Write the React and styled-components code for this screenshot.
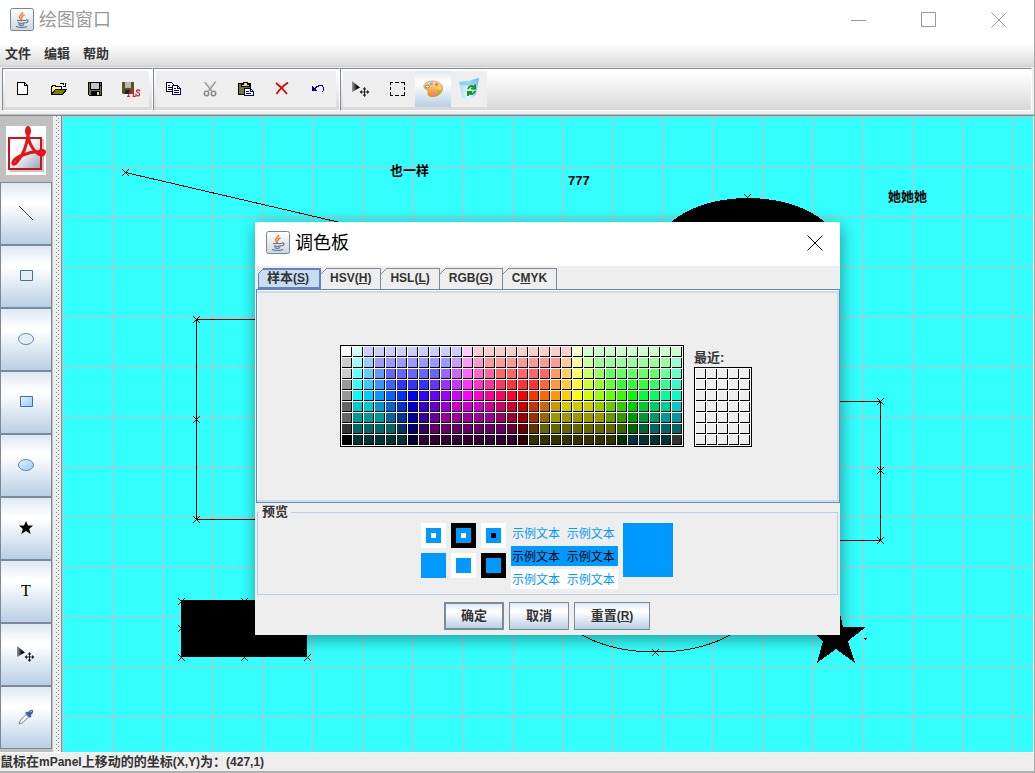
import React, { useState } from "react";
import styled, { createGlobalStyle, css, ThemeProvider } from "styled-components";

const theme = {
  colors: {
    control: "#eeeeee",
    edge: "#7a8a99",
    accent: "#6382bf",
    tint: "#c8ddf2",
    line: "#b8cfe5",
    canvas: "#33ffff",
    grid: "#c0c0c0",
  },
  metal: "linear-gradient(#dde8f3 0%, #ffffff 30%, #ffffff 35%, #b8cfe5 100%)",
};

const GlobalStyle = createGlobalStyle`
  *,
  *::before {
    box-sizing: border-box;
  }
  body {
    margin: 0;
    background: #eeeeee;
    color: #333333;
    font: bold 12px/16px "Liberation Sans", "Noto Sans CJK SC", sans-serif;
  }
  button {
    appearance: none;
    border: 0;
    border-radius: 0;
    color: inherit;
    font: inherit;
    margin: 0;
    padding: 0;
  }
  svg {
    display: block;
  }
`;

const Cjk = styled.span`
  font-size: 13px;
`;

const Window = styled.div`
  border-right: 1px solid #a9a9a9;
  display: flex;
  flex-direction: column;
  min-height: 100vh;
`;

const TitleBar = styled.header`
  align-items: center;
  background: #ffffff;
  color: ${(props) => (props.$active ? "#000000" : "#999999")};
  display: flex;
  height: ${(props) => (props.$active ? "44px" : "40px")};
  padding-bottom: ${(props) => (props.$active ? "2px" : "0")};
  padding-left: ${(props) => (props.$active ? "11px" : "10px")};
`;

const Title = styled.h1`
  flex: 1;
  font-size: 18px;
  font-weight: 400;
  line-height: 24px;
  margin: 0 0 0 5px;
`;

const CaptionButton = styled.button`
  align-items: center;
  background: transparent;
  display: flex;
  height: 40px;
  justify-content: center;
  width: ${(props) => props.$width || "70px"};
`;

const MenuBar = styled.nav`
  align-items: center;
  background: linear-gradient(#ffffff 0%, #ffffff 15%, #dadada 100%);
  border-bottom: 1px solid #cccccc;
  display: flex;
  gap: 13px;
  height: 27px;
  padding: 1px 0 0 5px;
`;

const MenuItem = styled.button`
  background: transparent;
  font-size: 13px;
`;

const ToolArea = styled.div`
  background: ${(props) => props.theme.colors.control};
  border-bottom: 1px solid ${(props) => props.theme.colors.grid};
  display: flex;
  height: 48px;
  padding: 1px 2px 3px 2px;
`;

const ToolBar = styled.div`
  background: linear-gradient(#ffffff 0%, #ffffff 10%, #d8d8d8 100%);
  border: 1px solid #ffffff;
  border-left-color: ${(props) => props.theme.colors.edge};
  border-top-color: ${(props) => props.theme.colors.edge};
  display: flex;
  flex: ${(props) => (props.$grow ? "1" : "none")};
  padding: 2px 3px 0 2px;
`;

const ToolButton = styled.button`
  align-items: center;
  background: ${(props) => (props.$pressed ? props.theme.metal : props.theme.colors.control)};
  display: flex;
  height: 36px;
  justify-content: center;
  width: 36px;
`;

const Workspace = styled.main`
  border-top: 1px solid ${(props) => props.theme.colors.edge};
  display: flex;
  flex: 1;
  padding-right: 1px;
`;

const Sidebar = styled.aside`
  background: ${(props) => props.theme.colors.grid};
  padding-right: 1px;
  width: 53px;
`;

const Logo = styled.div`
  height: 66px;
  padding: 10px 6px 0;
`;

const ShapeButton = styled.button`
  align-items: center;
  background: ${(props) => props.theme.metal};
  border: 1px solid ${(props) => props.theme.colors.edge};
  color: #000000;
  display: flex;
  height: 63px;
  justify-content: center;
  padding-bottom: 2px;
  width: 52px;
`;

const Divider = styled.div`
  background: ${(props) => props.theme.colors.control};
  border-right: 1px solid ${(props) => props.theme.colors.edge};
  padding: 0 3px;
  width: 9px;

  &::before {
    background-image: conic-gradient(at 1px 1px, transparent 75%, #7f8790 0),
      conic-gradient(at 1px 1px, transparent 75%, #7f8790 0);
    background-position: 0 0, 2px 2px;
    background-size: 4px 4px;
    content: "";
    display: block;
    height: 100%;
    width: 3px;
  }
`;

const Canvas = styled.div`
  background-color: ${(props) => props.theme.colors.canvas};
  background-image: linear-gradient(${(props) => props.theme.colors.grid} 1px, transparent 1px),
    linear-gradient(90deg, ${(props) => props.theme.colors.grid} 1px, transparent 1px);
  background-size: 50px 50px;
  flex: 1;
  min-width: 0;
  overflow: hidden;
`;

const StatusBar = styled.footer`
  border-bottom: 2px solid #b0b0b0;
  border-top: 1px solid #ffffff;
  height: 21px;
  line-height: 18px;
  white-space: nowrap;
`;

const Dialog = styled.div`
  background: ${(props) => props.theme.colors.control};
  box-shadow: 1px 4px 16px rgba(0, 0, 0, 0.4);
  left: 255px;
  position: absolute;
  top: 222px;
  width: 585px;
`;

const TabList = styled.div`
  display: flex;
  padding: 2px 0 0 3px;
`;

const Tab = styled.button`
  background: ${(props) => props.theme.colors.control};
  border: 1px solid ${(props) => props.theme.colors.edge};
  border-bottom: 0;
  border-left: 0;
  height: 21px;
  padding: 0 9px 2px;
  position: relative;

  &::before {
    background: linear-gradient(
      135deg,
      ${(props) => props.theme.colors.control} 44%,
      ${(props) => (props.$selected ? props.theme.colors.accent : props.theme.colors.edge)} 44%,
      ${(props) => (props.$selected ? props.theme.colors.accent : props.theme.colors.edge)} 56%,
      transparent 56%
    );
    content: "";
    height: 6px;
    left: 0;
    position: absolute;
    top: -1px;
    width: 6px;
  }

  ${(props) =>
    props.$selected &&
    css`
      background: ${props.theme.colors.tint};
      border: 2px solid ${props.theme.colors.accent};
      border-left-width: 1px;
      padding: 0 10px 1px 8px;

      &::before {
        left: -1px;
        top: -2px;
      }
    `}
`;

const TabPanel = styled.section`
  align-items: center;
  border: 1px solid ${(props) => props.theme.colors.accent};
  border-bottom-color: ${(props) => props.theme.colors.edge};
  border-right-color: ${(props) => props.theme.colors.edge};
  box-shadow: inset 0 1px #ffffff, inset 0 3px ${(props) => props.theme.colors.tint},
    inset -2px -2px ${(props) => props.theme.colors.tint}, inset 1px 0 #ffffff;
  display: flex;
  height: 214px;
  justify-content: center;
  margin-left: 1px;
  padding-right: 4px;
`;

const SwatchGroup = styled.div`
  align-items: flex-end;
  display: flex;
  gap: 10px;
`;

const Recent = styled.div`
  line-height: 18px;
`;

const SwatchGrid = styled.div`
  background: #ffffff;
  border: 1px solid #000000;
  display: grid;
  gap: 1px;
  grid-template-columns: repeat(${(props) => props.$columns}, 10px);
  padding: 1px;
  width: max-content;
`;

const Swatch = styled.button`
  border-bottom: 1px solid #000000;
  border-right: 1px solid #000000;
  height: 10px;
`;

const Preview = styled.fieldset`
  border: 1px solid ${(props) => props.theme.colors.line};
  display: flex;
  gap: 5px;
  height: 92px;
  justify-content: center;
  margin: 0 2px;
  min-width: 0;
  padding: 2px 1px 0 0;
`;

const Legend = styled.legend`
  font-size: 13px;
  line-height: 18px;
  margin-left: 1px;
  padding: 0 3px;
`;

const ChipGrid = styled.div`
  align-content: start;
  display: grid;
  gap: 5px;
  grid-template-columns: repeat(3, 25px);
  grid-auto-rows: 25px;
`;

const Chip = styled.div`
  align-items: center;
  background: ${(props) => props.$outer};
  display: flex;
  justify-content: center;

  &::before {
    background: ${(props) => props.$core};
    border: 5px solid ${(props) => props.$middle};
    content: "";
    height: 15px;
    width: 15px;
  }
`;

const Samples = styled.div`
  display: flex;
  flex-direction: column;
  gap: 3px;
  width: 107px;
`;

const Sample = styled.div`
  background: ${(props) => props.$background};
  color: ${(props) => props.$color};
  font-weight: 400;
  height: 20px;
  line-height: 22px;
  padding-left: 1px;
  white-space: pre;
`;

const ColorBlock = styled.div`
  background: ${(props) => props.$color};
  height: 54px;
  width: 50px;
`;

const Actions = styled.div`
  display: flex;
  gap: 5px;
  justify-content: center;
  padding: 7px 1px 5px 0;
`;

const ActionButton = styled.button`
  background: ${(props) => props.theme.metal};
  border: ${(props) => (props.$primary ? "2px" : "1px")} solid ${(props) => props.theme.colors.edge};
  height: 28px;
  width: ${(props) => (props.$wide ? "76px" : "60px")};
`;

// "color*count" runs, one string per row of the swatch table
const SWATCH_ROWS = [
  "fff cff ccf*9 fcf fcc*9 ffc cfc*9",
  "ccc 9ff 9cf 99f*7 c9f f9f f9c f99*7 fc9 ff9 cf9 9f9*7 9fc",
  "ccc 6ff 6cf 69f 66f*5 96f c6f f6f f6c f69 f66*5 f96 fc6 ff6 cf6 9f6 6f6*5 6f9 6fc",
  "999 3ff 3cf 39f 36f 33f*3 63f 93f c3f f3f f3c f39 f36 f33*3 f63 f93 fc3 ff3 cf3 9f3 6f3 3f3*3 3f6 3f9 3fc",
  "999 0ff 0cf 09f 06f 03f 00f 30f 60f 90f c0f f0f f0c f09 f06 f03 f00 f30 f60 f90 fc0 ff0 cf0 9f0 6f0 3f0 0f0 0f3 0f6 0f9 0fc",
  "666 0cc*2 09c 06c 03c 00c 30c 60c 90c c0c*3 c09 c06 c03 c00 c30 c60 c90 cc0*3 9c0 6c0 3c0 0c0 0c3 0c6 0c9 0cc",
  "666 099*3 069 039 009 309 609 909*5 906 903 900 930 960 990*5 690 390 090 093 096 099*2",
  "333 066*4 036 006 306 606*7 603 600 630 660*7 360 060 063 066*3",
  "000 033*5 003 303*9 300 330*8 030 033*4 333",
];

const swatches = SWATCH_ROWS.flatMap((row) =>
  row.split(" ").flatMap((run) => {
    const [color, count = 1] = run.split("*");
    return Array(Number(count)).fill(`#${color}`);
  })
);

const recentSwatches = Array(35).fill("#eeeeee");

const JavaIcon = () => (
  <svg width="24" height="24" viewBox="0 0 24 24" fill="none">
    <defs>
      <linearGradient id="cup-back" x1="0" y1="0" x2="0" y2="1">
        <stop offset="0" stopColor="#ffffff" />
        <stop offset="1" stopColor="#cfd6dd" />
      </linearGradient>
    </defs>
    <rect x="0.5" y="0.5" width="23" height="22" rx="2" fill="url(#cup-back)" stroke="#6f8798" />
    <path d="M12.5 4c1 2-4 3.500-3 5.500 .5 1 1.500 1.500 2 2.500M14.500 7c-2 .8-3.500 2-2.500 3.500" stroke="#ee7a22" strokeWidth="1.500" />
    <path d="M7 12.500h9M8 14.500c1 1 6 1 7 0M8.500 16.500c2 1 4 1 5.500 0M6 18.500c3 1.300 9 1.300 11 0M16 12c3-.5 2.500 2.500-.5 3" stroke="#4f7597" strokeWidth="1.200" />
  </svg>
);

const CrossIcon = ({ color }) => (
  <svg width="16" height="16" viewBox="0 0 16 16" stroke={color}>
    <path d="M0.500 0.500l15 15M15.500 0.500l-15 15" />
  </svg>
);

const PixelSvg = ({ width = 16, height = 16, children }) => (
  <svg width={width} height={height} viewBox={`0 0 ${width} ${height}`} fill="none" shapeRendering="crispEdges">
    {children}
  </svg>
);

const NewIcon = () => (
  <PixelSvg>
    <path d="M2.500 1.500h7l3 3v9h-10z" fill="#fff" stroke="#000" />
    <path d="M9.500 1.500v3h3" stroke="#000" />
  </PixelSvg>
);

const OpenIcon = () => (
  <PixelSvg>
    <path d="M0.500 13.500v-8h1v-1h3v1h6v4" fill="#ffff7a" stroke="#000" />
    <path d="M1 13V6h9v3H5z" fill="#ffff66" />
    <path d="M0.500 13.500l4-5h11l-4 5z" fill="#808000" stroke="#000" />
    <path d="M8.500 3.500c1-2 4-2 5 1M14.500 2v3H11.500" stroke="#000" />
  </PixelSvg>
);

const SaveIcon = () => (
  <PixelSvg>
    <path d="M1.500 1.500h13v13h-12l-1-1z" fill="#808000" stroke="#000" />
    <path d="M4 2h8v6H4z" fill="#c6c6c6" />
    <path d="M3.500 2v6.500h9V2M13 4h1" stroke="#000" />
    <path d="M4 10h9v4H4z" fill="#000" />
    <path d="M10 11h2v3h-2z" fill="#d8d8d8" />
  </PixelSvg>
);

const SaveAsIcon = () => (
  <svg width="20" height="16" viewBox="0 0 20 16">
    <path d="M1 1h12v12H2l-1-1z" fill="#56561c" />
    <path d="M4 1h6v6H4z" fill="#b8b8b8" />
    <path d="M4 9h6v4H4z" fill="#222" />
    <path d="M7 15.500l3.500-8 2.500 8M8.500 12.500h4M6 15.500h3M11.500 15.500h3M18.500 9.500c-3-2-4 1-1.500 2s2 4.500-2 3M18.500 8.500v2M15 12.500v3" fill="none" stroke="#c42b2b" strokeWidth="1.200" />
  </svg>
);

const CopyIcon = () => (
  <PixelSvg>
    <path d="M0.500 1.500h5l3 3v6h-8z" fill="#fff" stroke="#000" />
    <path d="M2 4.500h2M2 6.500h5M2 8.500h5" stroke="#000" />
    <path d="M6.500 4.500h5l3 3v6h-8z" fill="#fff" stroke="#000080" />
    <path d="M11.500 4.500v3h3M8 7.500h2M8 9.500h5M8 11.500h5" stroke="#000080" />
  </PixelSvg>
);

const CutIcon = () => (
  <svg width="16" height="16" viewBox="0 0 16 16" fill="none" stroke="#8a8a8a">
    <path d="M3 1l7 9M14 0L6 10" strokeWidth="2" stroke="#c4c4c4" />
    <path d="M2.500 1l7 9M13.500 1L7 10" />
    <circle cx="4.500" cy="12.500" r="2.200" strokeWidth="1.500" />
    <circle cx="11.500" cy="12.500" r="2.200" strokeWidth="1.500" />
  </svg>
);

const PasteIcon = () => (
  <PixelSvg>
    <path d="M0.500 2.500h12v11h-12z" fill="#77752f" stroke="#000" />
    <path d="M3 5V3h2V1h4v2h2v2z" fill="#e8e34a" stroke="#000" />
    <path d="M6.500 7.500h6l3 3v4h-9z" fill="#fff" stroke="#000080" />
    <path d="M8 10.500h3M8 12.500h5M12.500 8v2.500h3" stroke="#000080" />
  </PixelSvg>
);

const DeleteIcon = () => (
  <svg width="16" height="16" viewBox="0 0 16 16" fill="none" stroke="#dd0000">
    <path d="M2 2c4 3 8 7 11 11" strokeWidth="1.800" />
    <path d="M14 1.500C9 5 5 9 2.500 13" strokeWidth="1.800" />
  </svg>
);

const UndoIcon = () => (
  <PixelSvg>
    <path d="M2 5v5h5z" fill="#000080" />
    <path d="M5 7.500l2-2h1l1-1h3l1.500 2v3l-1.500 1" stroke="#000080" />
  </PixelSvg>
);

const MoveIcon = () => (
  <svg width="18" height="16" viewBox="0 0 18 16">
    <defs>
      <linearGradient id="pointer">
        <stop offset="0" stopColor="#999" />
        <stop offset="0.700" stopColor="#000" />
      </linearGradient>
    </defs>
    <path d="M0 0v11l8-4.500z" fill="url(#pointer)" />
    <path d="M12.500 6l2 2.500h-4zM12.500 16l2-2.500h-4zM7.500 11l2.500-2v4zM17.500 11l-2.500-2v4z" fill="#222" />
    <path d="M12.500 8v6M9.500 11h6" stroke="#222" />
  </svg>
);

const SelectIcon = () => (
  <PixelSvg>
    <path d="M1 4V1.500h3M6 1.500h4M12 1.500h3.500V4M15.500 6v3M15.500 11v3.500H12M10 14.500H6M4 14.500H1.500V11M1.500 9V6M1.500 4V1" stroke="#000" />
  </PixelSvg>
);

const PaletteIcon = () => (
  <svg width="20" height="18" viewBox="0 0 20 18">
    <defs>
      <linearGradient id="palette" x1="0" y1="0" x2="0" y2="1">
        <stop offset="0" stopColor="#ffe0a0" />
        <stop offset="1" stopColor="#f08a10" />
      </linearGradient>
    </defs>
    <path d="M1 7C0 3 6 1 10 1c6 0 10 4 9.500 8-.5 5-6 8-11 7.500C3 16 6 12 4.500 10 3 9 1.500 9.500 1 7z" fill="url(#palette)" stroke="#c98a3a" strokeWidth="0.700" />
    <ellipse cx="4.500" cy="6.500" rx="2" ry="1.400" fill="#fff" stroke="#997247" />
    <circle cx="8.500" cy="3.800" r="1.500" fill="#56c6ff" />
    <circle cx="13.500" cy="4.500" r="1.500" fill="#ff6c4a" />
    <circle cx="16.500" cy="8" r="1.500" fill="#ffe34a" />
    <circle cx="16" cy="12" r="1.500" fill="#50dc58" />
    <circle cx="11.500" cy="14" r="1.500" fill="#d47aff" />
  </svg>
);

const RecycleIcon = () => (
  <svg width="22" height="22" viewBox="0 0 22 22">
    <defs>
      <linearGradient id="bin">
        <stop offset="0" stopColor="#a9dcff" />
        <stop offset="0.500" stopColor="#e8f8ff" />
        <stop offset="1" stopColor="#67b5ec" />
      </linearGradient>
    </defs>
    <path d="M1 4l11-2 9-2-3 17-9 5-5-3z" fill="url(#bin)" />
    <path d="M1 4l10-1 10-3-8 8-10-1z" fill="#6ec6f5" opacity="0.700" />
    <path d="M10 11c1-3 4-4 6-2M17 6.500v4h-4M17 13c-1 3-4 4-6 2M10 18v-4h4" fill="none" stroke="#149a1d" strokeWidth="2" />
  </svg>
);

const PdfIcon = () => (
  <svg width="40" height="49" viewBox="0 0 40 49" fill="none">
    <defs>
      <linearGradient id="pdf-page" x1="0" y1="0" x2="1" y2="1">
        <stop offset="0.400" stopColor="#ffffff" />
        <stop offset="1" stopColor="#8fa3b4" />
      </linearGradient>
    </defs>
    <path d="M0 0h40v49H0z" fill="#fff" />
    <path d="M4 13h34v33H4z" fill="#c4c4c4" />
    <path d="M3 12h32v31H3z" fill="url(#pdf-page)" stroke="#c9141b" strokeWidth="2" />
    <path d="M22 9c-1 9-5 20-11 27-2 3-5 3-4 0 2-5 17-11 27-10 4 0 5 3 2 3-6 0-13-10-14-20z" stroke="#e8121b" strokeWidth="3" strokeLinejoin="round" />
    <ellipse cx="22" cy="5" rx="3" ry="5" fill="#e8121b" />
    <ellipse cx="36" cy="26" rx="4" ry="3" fill="#e8121b" />
  </svg>
);

const LineIcon = () => (
  <svg width="16" height="16" viewBox="0 0 16 16">
    <path d="M1 1l14 14" stroke="#444" />
  </svg>
);

const RectIcon = ({ filled }) => (
  <svg width="14" height="12" viewBox="0 0 14 12">
    <defs>
      <linearGradient id="shape-fill" x1="0" y1="0" x2="1" y2="1">
        <stop offset="0" stopColor="#e4f3ff" />
        <stop offset="1" stopColor="#94cbfc" />
      </linearGradient>
    </defs>
    <path d="M1.500 0.500h12v10h-12z" fill={filled ? "url(#shape-fill)" : "#e4edf6"} stroke="#3f71a6" />
  </svg>
);

const EllipseIcon = ({ filled }) => (
  <svg width="16" height="12" viewBox="0 0 16 12">
    <ellipse cx="8" cy="6" rx="7.500" ry="5.500" fill={filled ? "url(#shape-fill)" : "#e4edf6"} stroke="#5e89b6" />
  </svg>
);

const StarIcon = () => (
  <svg width="14" height="13" viewBox="0 0 14 13">
    <path d="M7 0l2 4.500h5L10.200 8l1.500 5L7 10l-4.700 3 1.500-5L0 4.500h5z" />
  </svg>
);

const TextIcon = styled.span`
  font: 400 16px/20px "Liberation Serif", serif;
`;

const PickerIcon = () => (
  <svg width="16" height="16" viewBox="0 0 16 16">
    <path d="M1 15l1.500-4L8 5.500l2.500 2.500L5 13.500z" fill="#f5f8fb" stroke="#76828f" />
    <path d="M7 4l5 5 1.500-2-1-1C15 5 16 2 14.500 1S11 1.500 10 3.500L9 2.500z" fill="#3c5fa4" />
    <path d="M12 3l2-1" stroke="#b6cbef" />
  </svg>
);

const TOOL_BARS = [
  [
    ["新建", NewIcon],
    ["打开", OpenIcon],
    ["保存", SaveIcon],
    ["另存为", SaveAsIcon],
  ],
  [
    ["复制", CopyIcon],
    ["剪切", CutIcon],
    ["粘贴", PasteIcon],
    ["删除", DeleteIcon],
    ["撤销", UndoIcon],
  ],
  [
    ["移动", MoveIcon],
    ["选择", SelectIcon],
    ["调色板", PaletteIcon],
    ["清空", RecycleIcon],
  ],
];

const SHAPES = [
  ["直线", <LineIcon />],
  ["矩形", <RectIcon />],
  ["椭圆", <EllipseIcon />],
  ["填充矩形", <RectIcon filled />],
  ["填充椭圆", <EllipseIcon filled />],
  ["星形", <StarIcon />],
  ["文本", <TextIcon>T</TextIcon>],
  ["移动", <MoveIcon />],
  ["取色", <PickerIcon />],
];

const TABS = [
  ["samples", <><Cjk>样本</Cjk>(<u>S</u>)</>],
  ["hsv", <>HSV(<u>H</u>)</>],
  ["hsl", <>HSL(<u>L</u>)</>],
  ["rgb", <>RGB(<u>G</u>)</>],
  ["cmyk", <>C<u>M</u>YK</>],
];

// selection handles of the drawn shapes
const HANDLES = [
  [63, 56],
  [134, 203],
  [134, 303],
  [134, 403],
  [818, 285],
  [818, 354],
  [818, 424],
  [685, 81],
  [593, 536],
  [119, 485],
  [182, 485],
  [119, 512],
  [119, 541],
  [182, 541],
  [245, 541],
];

const Drawing = () => (
  <svg width="100%" height="630" fill="none" stroke="#000" shapeRendering="crispEdges">
    {HANDLES.map(([x, y]) => (
      <path key={`${x}-${y}`} d={`M${x - 3} ${y - 3}l7 7m0-7l-7 7`} />
    ))}
    <path d="M63.500 56.500L289 109" />
    <rect x="134.500" y="203.500" width="200" height="200" />
    <rect x="618.500" y="285.500" width="200" height="139" />
    <ellipse cx="594" cy="484" rx="100" ry="52" />
    <g fill="#000" stroke="none">
      <ellipse cx="686" cy="134" rx="91" ry="52" />
      <rect x="119" y="484" width="126" height="57" />
      <path d="M775 484l6 27h23l-18 14 7 22-19-14-19 14 6-22-16-14h23z" />
      <path d="M801 522h4l-2 2z" />
      <g fontSize="13" fontWeight="700">
        <text x="328" y="59">也一样</text>
        <text x="506" y="69">777</text>
        <text x="826" y="85">她她她</text>
      </g>
    </g>
  </svg>
);

const ColorDialog = ({ onClose }) => {
  const [tab, setTab] = useState("samples");
  const [color, setColor] = useState("#0099ff");

  return (
    <Dialog role="dialog" aria-label="调色板">
      <TitleBar $active>
        <JavaIcon />
        <Title as="h2">调色板</Title>
        <CaptionButton $width="50px" aria-label="关闭" onClick={onClose}>
          <CrossIcon color="#000" />
        </CaptionButton>
      </TitleBar>
      <TabList role="tablist">
        {TABS.map(([id, label]) => (
          <Tab key={id} role="tab" aria-selected={tab === id} $selected={tab === id} onClick={() => setTab(id)}>
            {label}
          </Tab>
        ))}
      </TabList>
      <TabPanel role="tabpanel">
        <SwatchGroup>
          <SwatchGrid $columns={31}>
            {swatches.map((swatch, index) => (
              <Swatch key={index} aria-label={swatch} style={{ background: swatch }} onClick={() => setColor(swatch)} />
            ))}
          </SwatchGrid>
          <Recent>
            <Cjk>最近:</Cjk>
            <SwatchGrid $columns={5}>
              {recentSwatches.map((swatch, index) => (
                <Swatch key={index} aria-label={`最近 ${index + 1}`} style={{ background: swatch }} />
              ))}
            </SwatchGrid>
          </Recent>
        </SwatchGroup>
      </TabPanel>
      <Preview>
        <Legend>预览</Legend>
        <ChipGrid>
          <Chip $outer="#fff" $middle={color} $core="#fff" />
          <Chip $outer="#000" $middle={color} $core="#fff" />
          <Chip $outer="#fff" $middle={color} $core="#000" />
          <Chip $outer={color} $middle={color} $core={color} />
          <Chip $outer="#fff" $middle={color} $core={color} />
          <Chip $outer="#000" $middle={color} $core={color} />
        </ChipGrid>
        <Samples>
          <Sample $color={color} $background="transparent">{"示例文本  示例文本"}</Sample>
          <Sample $color="#000" $background={color}>{"示例文本  示例文本"}</Sample>
          <Sample $color={color} $background="#fff">{"示例文本  示例文本"}</Sample>
        </Samples>
        <ColorBlock $color={color} />
      </Preview>
      <Actions>
        <ActionButton $primary onClick={onClose}>
          <Cjk>确定</Cjk>
        </ActionButton>
        <ActionButton onClick={onClose}>
          <Cjk>取消</Cjk>
        </ActionButton>
        <ActionButton $wide onClick={() => setColor("#0099ff")}>
          <Cjk>重置</Cjk>(<u>R</u>)
        </ActionButton>
      </Actions>
    </Dialog>
  );
};

const App = () => {
  const [dialogOpen, setDialogOpen] = useState(true);

  return (
    <ThemeProvider theme={theme}>
      <GlobalStyle />
      <Window>
        <TitleBar>
          <JavaIcon />
          <Title>绘图窗口</Title>
          <CaptionButton aria-label="最小化">
            <svg width="16" height="16" stroke="#999">
              <path d="M0 8.500h15" />
            </svg>
          </CaptionButton>
          <CaptionButton aria-label="最大化">
            <svg width="16" height="16" stroke="#999" fill="none">
              <path d="M0.500 0.500h14v14h-14z" />
            </svg>
          </CaptionButton>
          <CaptionButton aria-label="关闭">
            <CrossIcon color="#999" />
          </CaptionButton>
        </TitleBar>
        <MenuBar>
          <MenuItem>文件</MenuItem>
          <MenuItem>编辑</MenuItem>
          <MenuItem>帮助</MenuItem>
        </MenuBar>
        <ToolArea>
          {TOOL_BARS.map((tools, index) => (
            <ToolBar key={index} role="toolbar" $grow={index === TOOL_BARS.length - 1}>
              {tools.map(([label, Icon]) => (
                <ToolButton
                  key={label}
                  aria-label={label}
                  $pressed={label === "调色板" && dialogOpen}
                  onClick={label === "调色板" ? () => setDialogOpen(true) : undefined}
                >
                  <Icon />
                </ToolButton>
              ))}
            </ToolBar>
          ))}
        </ToolArea>
        <Workspace>
          <Sidebar>
            <Logo>
              <PdfIcon />
            </Logo>
            {SHAPES.map(([label, icon]) => (
              <ShapeButton key={label} aria-label={label}>
                {icon}
              </ShapeButton>
            ))}
          </Sidebar>
          <Divider />
          <Canvas>
            <Drawing />
          </Canvas>
        </Workspace>
        <StatusBar>
          <Cjk>鼠标在</Cjk>mPanel<Cjk>上移动的的坐标</Cjk>(X,Y)<Cjk>为：</Cjk>(427,1)
        </StatusBar>
      </Window>
      {dialogOpen ? <ColorDialog onClose={() => setDialogOpen(false)} /> : null}
    </ThemeProvider>
  );
};

export default App;
